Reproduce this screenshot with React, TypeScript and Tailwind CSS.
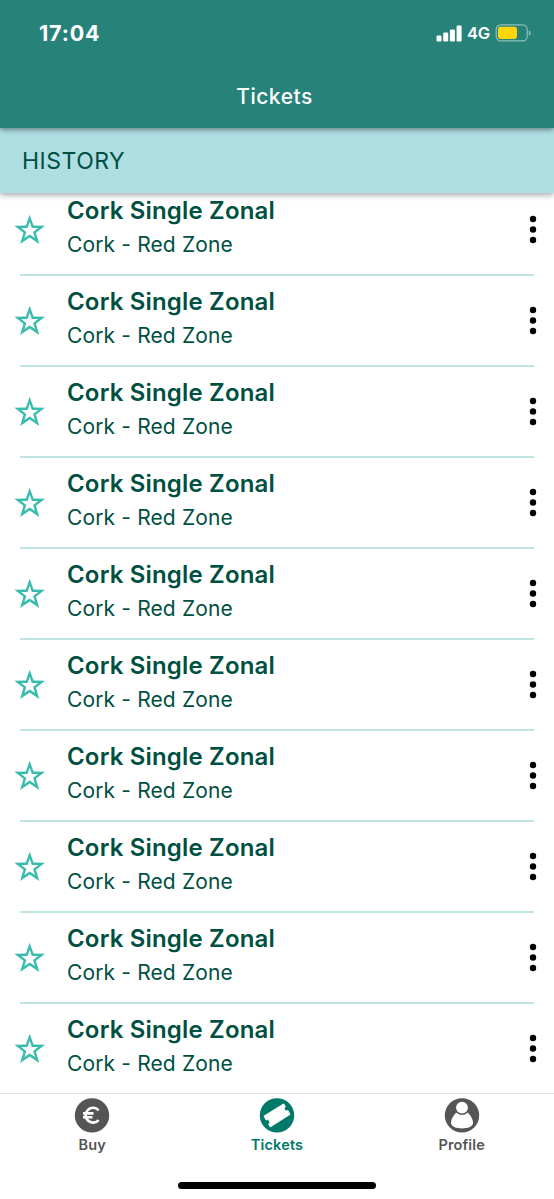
import React from 'react'

const tickets = Array.from({ length: 10 }, (_, i) => ({
  id: i + 1,
  title: 'Cork Single Zonal',
  zone: 'Cork - Red Zone'
}))

function StatusBar() {
  return (
    <div className="flex h-[66px] items-center justify-between pl-[39px] pr-[23px] text-white">
      <span className="text-[21.5px] font-bold leading-6 tracking-[0.8px]">17:04</span>
      <div className="flex items-center">
        <svg width="26" height="17" viewBox="0 0 26 17" fill="currentColor">
          <rect x="0.5" y="10.5" width="5" height="6" rx="1.2" />
          <rect x="7.2" y="7.5" width="5" height="9" rx="1.2" />
          <rect x="13.9" y="4.5" width="5" height="12" rx="1.2" />
          <rect x="20.6" y="0.5" width="5" height="16" rx="1.2" />
        </svg>
        <span className="ml-[5px] w-[23px] text-[16.5px] font-semibold leading-5 tracking-[-0.3px]">4G</span>
        <svg className="ml-[5px]" width="36" height="18" viewBox="0 0 36 18">
          <rect x="1.2" y="0.9" width="31" height="16" rx="4.6" fill="none" stroke="#8fbfb9" strokeWidth="1.2" />
          <rect x="3" y="2.8" width="19" height="12.2" rx="2.4" fill="#ffd60a" />
          <path d="M33.8 6.2v5.6c1.2-.4 1.8-1.5 1.8-2.8s-.6-2.4-1.8-2.8z" fill="#8fbfb9" />
        </svg>
      </div>
    </div>
  )
}

function StarIcon() {
  return (
    <svg className="shrink-0" width="32" height="32" viewBox="0 0 32 32" fill="#38bcab">
      <path
        fillRule="evenodd"
        d="M15.7 0.7L19.5 11.4L31 11.7L21.9 18.8L25.3 30L15.7 23.5L6.1 30L9.5 18.8L0.4 11.7L11.9 11.4Z M15.7 7.8L13.5 13.9L7.2 14.1L12.3 17.9L10.4 24L15.7 20.4L21 24L19.1 17.9L24.2 14.1L17.9 13.9Z"
      />
    </svg>
  )
}

function TicketRow({ title, zone }: { title: string; zone: string }) {
  return (
    <li className="relative flex h-[91px] items-center pl-[14px] pr-[16px]">
      <StarIcon />
      <div className="ml-[21px] flex-1 pb-1 text-[#005042]">
        <div className="text-[24px] font-semibold leading-[34px] tracking-[0.17px]">{title}</div>
        <div className="text-[21px] leading-[33px] tracking-[0.14px]">{zone}</div>
      </div>
      <svg width="10" height="30" viewBox="0 0 10 30" fill="#000">
        <circle cx="5" cy="4" r="3.2" />
        <circle cx="5" cy="14.5" r="3.2" />
        <circle cx="5" cy="25" r="3.2" />
      </svg>
      <div className="absolute -bottom-px left-5 right-5 h-[2px] bg-[#bfe4e2]" />
    </li>
  )
}

function EuroIcon() {
  return (
    <svg width="36" height="36" viewBox="0 0 36 36">
      <circle cx="18" cy="18.4" r="17.2" fill="#555" />
      <path
        d="M24.6 13.3a7.4 7.4 0 1 0 0 9.8M9 16.4h10.5M9 20.2h9.5"
        fill="none"
        stroke="#fff"
        strokeWidth="2.6"
      />
    </svg>
  )
}

function TicketIcon() {
  return (
    <svg width="36" height="36" viewBox="0 0 36 36">
      <circle cx="18" cy="18.4" r="17.2" fill="#00796b" />
      <path
        d="M5 19L24.7 6.8L26.4 9.6a2.3 2.3 0 0 0 2.6 3.9L31 17.4L11.3 30L9.5 27.2a2.3 2.3 0 0 0-2.5-4.2z"
        fill="#fff"
        stroke="#fff"
        strokeWidth="0.8"
        strokeLinejoin="round"
      />
    </svg>
  )
}

function ProfileIcon() {
  return (
    <svg width="36" height="36" viewBox="0 0 36 36">
      <circle cx="18" cy="18.4" r="17.2" fill="#555" />
      <path
        d="M12 15.8C9 18.8 7 22.6 7 26c0 3.6 5.2 5.4 11 5.4s11-1.8 11-5.4c0-3.4-2-7.2-5-10.2z"
        fill="#fff"
      />
      <circle cx="18" cy="10.6" r="6.7" fill="#fff" stroke="#555" strokeWidth="1.5" />
    </svg>
  )
}

const tabs = [
  { label: 'Buy', icon: <EuroIcon />, color: 'text-[#555]' },
  { label: 'Tickets', icon: <TicketIcon />, color: 'text-[#00796b]' },
  { label: 'Profile', icon: <ProfileIcon />, color: 'text-[#555]' }
]

export default function App() {
  return (
    <div className="flex h-[1199px] w-[554px] flex-col overflow-hidden bg-white font-['Inter',sans-serif]">
      <header className="relative z-20 h-[128px] shrink-0 bg-[#27827a] shadow-[0_2px_5px_rgba(0,0,0,0.4)]">
        <StatusBar />
        <h1 className="mt-[16px] pr-[5px] text-center text-[21px] font-medium leading-[30px] tracking-[0.5px] text-white">
          Tickets
        </h1>
      </header>

      <div className="relative z-10 flex h-[65px] shrink-0 items-center bg-[#afdfe3] pl-[22px] pt-[2px] text-[23px] tracking-[0.5px] text-[#005042] shadow-[0_2px_6px_rgba(0,0,0,0.35)]">
        HISTORY
      </div>

      {/* first row is scrolled partly under the section header */}
      <main className="min-h-0 flex-1 overflow-hidden">
        <ul className="-mt-[9px]">
          {tickets.map((ticket) => (
            <TicketRow key={ticket.id} title={ticket.title} zone={ticket.zone} />
          ))}
        </ul>
      </main>

      <nav className="relative z-10 h-[106px] shrink-0">
        {/* covers the divider of the last row */}
        <div className="absolute inset-x-0 -top-px h-px bg-white" />
        <div className="grid grid-cols-3 border-t border-[#dfe5e9] bg-white">
          {tabs.map((tab) => (
            <div key={tab.label} className={`flex flex-col items-center pt-[3px] ${tab.color}`}>
              {tab.icon}
              <span className="mt-[2px] text-[14.5px] font-semibold leading-5 tracking-[0.15px]">{tab.label}</span>
            </div>
          ))}
        </div>
        <div className="absolute bottom-[10px] left-[178px] h-[7px] w-[198px] rounded-full bg-black" />
      </nav>
    </div>
  )
}
